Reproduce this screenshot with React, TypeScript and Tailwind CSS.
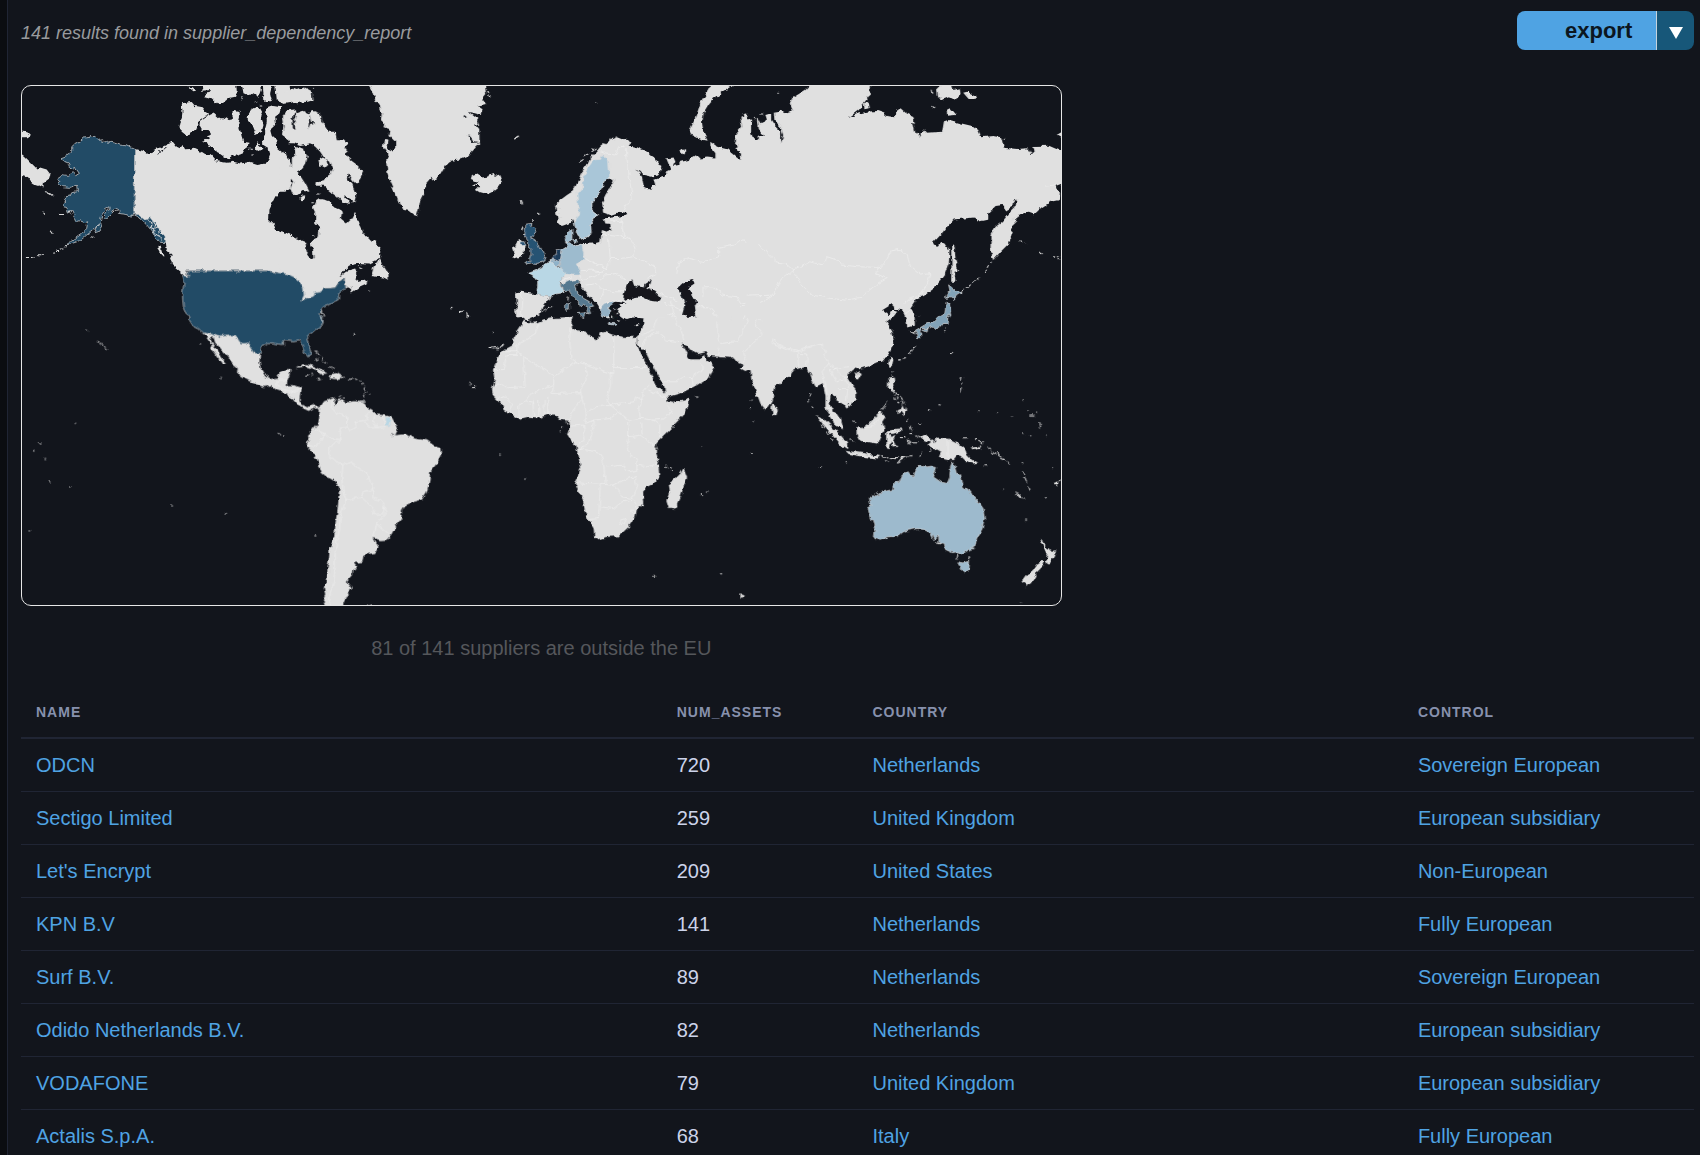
interface Supplier {
  name: string;
  assets: number;
  country: string;
  control: string;
}

interface Sheet {
  id: string;
  origin: string;
  land: string;
  tinted?: { d: string; fill: string }[];
  water?: string;
  borders?: string;
  specks?: string;
}

const suppliers: Supplier[] = [
  { name: "ODCN", assets: 720, country: "Netherlands", control: "Sovereign European" },
  { name: "Sectigo Limited", assets: 259, country: "United Kingdom", control: "European subsidiary" },
  { name: "Let's Encrypt", assets: 209, country: "United States", control: "Non-European" },
  { name: "KPN B.V", assets: 141, country: "Netherlands", control: "Fully European" },
  { name: "Surf B.V.", assets: 89, country: "Netherlands", control: "Sovereign European" },
  { name: "Odido Netherlands B.V.", assets: 82, country: "Netherlands", control: "European subsidiary" },
  { name: "VODAFONE", assets: 79, country: "United Kingdom", control: "European subsidiary" },
  { name: "Actalis S.p.A.", assets: 68, country: "Italy", control: "Fully European" },
];

// The map is split in sheets, each drawn at three units per pixel from its own origin.
const sheets: Sheet[] = [
  {
    id: "north-america-west",
    origin: "translate(20 80) scale(.33333)",
    land:
      "M343,207 365,212 385,222 392,222 400,210 415,205 430,197 445,190 458,185 470,200 480,205 488,195 495,208 510,207 520,203 540,212 555,222 572,226 585,240 600,245 620,248 640,245 660,250 680,247 690,248 712,255 735,250 745,235 750,222 745,205 730,195 728,180 735,165 735,150 750,150 755,168 768,180 772,205 785,215 800,225 812,250 812,325 795,335 780,335 765,350 748,385 747,420 760,432 768,450 790,455 812,465 812,590 775,578 745,572 503,572 485,570 465,555 455,545 450,535 455,525 440,510 437,485 430,470 410,450 395,430 375,420 358,405 343,400z" +
      "M-5,222 5,222 20,235 35,250 50,265 60,262 80,268 95,288 85,295 72,305 70,322 55,315 40,310 25,300 15,285 -5,300zM-5,153 22,157 30,165 20,172 -5,172z" +
      "M485,70 515,66 525,78 545,82 555,95 567,103 550,115 535,125 525,150 510,155 500,168 490,160 475,145 478,130 485,115 487,95z" +
      "M569,105 580,100 600,118 615,118 622,112 632,120 640,115 635,100 645,90 658,93 660,110 655,130 660,150 665,170 670,185 688,188 685,205 670,210 660,228 645,222 630,235 615,232 600,222 585,215 575,200 560,195 555,185 545,182 560,180 570,175 560,165 575,160 565,150 545,150 538,138 540,125 550,118z" +
      "M535,12 550,24 545,32 570,30 560,42 550,48 575,55 590,70 610,68 625,55 645,50 650,35 648,12zM665,12 670,40 690,48 700,40 715,50 722,30 720,12zM728,12 730,40 725,55 740,68 755,60 750,40 757,12zM765,12 770,60 790,72 812,68 812,12z" +
      "M680,110 690,92 705,83 720,85 728,100 725,120 730,135 725,155 708,165 700,150 692,130 680,120zM740,85 760,78 783,82 778,100 765,110 768,135 750,152 735,152 740,120 738,100zM712,190 730,205 720,215 705,208z" +
      "M455,545 475,552 495,568 503,578 502,592 488,580 470,565 455,552zM412,497 422,500 426,515 432,530 420,518 413,505zM505,20 518,22 528,32 520,34zM660,52 668,54 664,62zM578,238 600,242 595,248 570,246z",
    tinted: [
      {
        fill: "#234b66",
        d: "M343,207 320,198 300,195 280,188 262,186 258,182 245,184 245,176 235,178 225,170 212,168 210,162 203,173 190,174 180,182 178,188 165,188 155,197 155,212 145,225 123,233 135,248 145,252 150,265 165,270 165,262 178,280 168,286 160,278 145,286 130,284 110,298 120,305 115,312 130,320 150,322 170,315 172,335 155,338 150,348 138,350 128,380 140,382 145,396 158,390 165,405 160,415 165,427 180,422 195,428 203,425 200,445 185,462 170,472 150,485 135,494 150,492 180,482 200,465 225,445 240,430 245,405 255,390 270,380 270,388 258,394 250,415 265,412 278,400 275,390 285,384 300,390 295,400 315,402 330,408 343,403 358,403 375,417 390,412 405,430 420,452 435,468 437,487 425,487 412,478 400,460 385,440 370,425 350,408 343,406zM235,432 248,437 240,453 225,458z",
      },
    ],
    water: "M410,222 425,208 445,197 426,214zM622,235 650,225 640,240zM780,288 802,300 795,302z",
    specks:
      "M22,532 h12 M38,531 h6 M52,527 h8 M66,524 h5 M98,519 h6 M108,514 h8 M120,507 h9 M132,500 h7 M76,338 l14,3 8,6 M118,403 h12 M68,396 l5,4 M90,452 l6,8 M216,472 l3,-2 M705,66 l5,3 M720,75 l5,0 M695,225 h5 M690,205 h4 M385,422 l8,10 -2,10 10,4 0,12 12,4 M395,425 l12,16 8,4 2,14 M412,462 l10,6 2,12 M280,394 l14,-2 M150,392 l6,10",
  },
  {
    id: "north-america-east",
    origin: "translate(280 80) scale(.33333)",
    land:
      "M108,365 120,357 145,362 160,380 180,388 185,400 182,415 200,430 215,415 225,398 235,430 248,455 265,475 285,485 300,510 300,530 290,540 262,553 230,552 205,558 185,578 178,590 200,572 225,565 232,580 226,595 238,605 265,598 262,610 240,620 215,637 210,625 200,620 195,594 180,600 165,622 135,625 120,640 100,650 65,660 0,600 -5,600 -5,455 20,460 50,475 75,485 80,510 78,525 95,535 100,530 98,505 90,490 100,480 115,468 118,445 105,430 105,400 98,385z" +
      "M272,588 280,560 298,535 302,550 318,568 325,580 325,600 310,592 290,590z" +
      "M-5,215 10,215 20,235 22,250 35,260 35,235 45,225 43,208 55,200 72,208 80,230 75,250 65,265 50,275 62,290 75,310 88,335 70,333 55,345 35,340 30,325 40,300 30,295 20,320 -5,335z" +
      "M10,140 5,110 20,92 45,88 50,100 70,92 85,100 100,93 118,100 122,120 135,140 145,155 165,155 170,178 190,178 203,190 192,200 205,215 195,222 205,235 225,250 252,275 245,290 230,312 220,305 203,282 200,292 215,312 228,345 222,368 205,352 190,345 210,372 190,368 170,350 150,335 135,320 108,320 110,305 130,300 150,285 157,265 150,245 130,230 120,215 105,200 90,190 60,195 45,190 25,190 15,175 5,165z" +
      "M-5,38 15,38 35,25 50,30 70,22 95,35 97,60 80,65 50,70 30,62 -5,65zM115,240 128,232 142,240 145,255 130,262 118,255zM58,352 70,345 75,358 63,365z" +
      "M262,10 280,40 285,60 296,75 298,90 305,100 302,120 312,130 310,145 328,150 325,165 345,185 345,205 330,215 320,210 325,182 312,180 308,200 325,225 318,240 320,265 325,295 340,330 355,365 370,390 385,392 400,405 410,408 415,390 420,360 435,330 437,310 455,290 460,298 480,285 500,250 510,242 540,238 560,230 580,210 598,188 597,150 580,130 597,135 590,115 565,95 575,98 600,105 607,88 595,80 617,75 606,60 618,45 614,10z" +
      "M575,285 590,280 600,292 620,290 640,282 648,288 655,280 665,305 655,320 640,332 620,342 595,335 585,328 595,318 575,318 592,308 572,300z",
    water: "M42,98 48,98 42,120 46,150 38,145 37,115zM88,105 92,125 105,128 90,132 84,150 86,128zM205,560 228,552 222,562zM563,162 574,174 580,184 598,187 572,189 568,176zM552,105 560,112 550,115z",
    specks:
      "M706,173 l8,-5 M723,364 l3,8 M772,396 l2,6 M513,685 h2 M536,694 h7 M546,693 h3 M560,704 l6,6 M222,762 h1 M636,757 h2 M627,802 h5 M640,803 h6 M650,800 l6,6 M662,800 l6,-8 M265,633 h2 M625,45 l5,3 M622,35 h4 M112,342 h8 M95,368 h5 M98,466 l3,3 M235,560 l8,4 M97,22 h2",
  },
  {
    id: "europe",
    origin: "translate(500 80) scale(.33333)",
    land:
      "M166,375 180,360 200,345 215,335 225,320 235,300 245,275 260,255 268,235 285,218 300,200 320,185 350,172 365,178 380,176 390,188 385,195 410,202 440,215 465,235 483,262 475,285 455,290 430,285 408,268 425,290 430,320 450,330 452,315 465,315 460,300 490,290 500,270 510,265 498,235 520,232 525,245 518,258 535,255 540,245 565,240 590,225 600,235 620,232 645,235 645,220 630,200 630,185 650,200 680,208 700,225 720,240 722,225 705,205 715,200 703,185 705,165 725,140 720,115 735,108 752,120 752,160 765,190 758,215 760,250 745,278 755,275 770,245 765,220 790,228 800,245 812,240 812,812 430,812 410,790 415,768 428,745 433,715 400,712 375,720 360,710 350,690 360,675 340,668 325,675 325,715 312,712 295,680 280,660 262,645 240,618 238,600 215,602 190,612 178,602 190,590 195,572 178,560 187,508 200,500 220,500 245,492 280,490 300,485 303,460 305,450 320,455 332,450 330,432 315,430 310,415 335,412 370,408 380,402 350,398 330,405 308,397 305,365 315,345 330,320 340,300 325,295 310,305 305,330 290,345 275,365 275,395 290,405 268,435 270,455 262,470 240,478 228,455 225,435 218,420 205,430 185,438 172,425 168,400z" +
      "M45,637 60,635 110,643 128,648 155,652 140,660 125,680 122,700 100,712 80,720 65,710 48,712 45,690 50,665z" +
      "M50,483 65,480 73,495 70,520 60,530 37,537 40,520 35,505 45,500zM635,10 705,10 665,35 645,50 625,75 610,100 605,130 610,160 622,182 600,178 575,165 568,150 580,125 590,100 600,70 615,45z" +
      "M402,733 420,728 412,738zM540,215 548,208 558,215 550,225zM730,102 740,100 742,110 732,110zM812,100 795,105 800,120 780,130 772,115 775,150 790,168 812,170z",
    tinted: [
      { fill: "#a9c6d8", d: "M305,222 315,235 325,245 328,292 325,295 310,305 305,330 290,345 275,365 275,395 288,405 268,435 270,455 262,470 240,478 228,455 222,430 235,400 232,370 230,335 248,325 248,290 265,260 280,240 300,238z" },
      { fill: "#285273", d: "M78,432 95,430 92,440 107,450 100,465 92,472 105,480 112,490 120,510 128,515 137,530 130,545 110,550 95,548 75,553 90,540 82,535 95,525 95,508 85,500 85,482 73,465 75,450zM60,485 72,485 75,495 60,497z" },
      { fill: "#b9d7e5", d: "M110,643 112,605 100,590 83,580 105,572 120,565 135,550 150,543 160,552 175,562 195,572 190,590 178,602 185,625 188,638 165,642 150,650 128,648z" },
      { fill: "#8fb2c9", d: "M150,543 162,538 174,545 176,558 168,560z" },
      { fill: "#1d3c5c", d: "M160,535 170,512 187,508 182,528 178,545 162,538z" },
      { fill: "#9dbbce", d: "M187,508 200,500 198,488 212,490 220,500 245,492 250,520 250,540 228,552 240,572 235,585 215,585 195,582 190,572 178,560 176,545 182,530zM195,465 210,450 215,445 215,475 205,490 197,488zM218,478 230,478 226,490z" },
      { fill: "#54788f", d: "M185,612 205,602 235,598 238,610 222,615 230,635 250,655 268,665 280,678 268,680 272,692 262,702 260,685 235,668 215,645 205,630 188,632zM232,700 258,698 252,713zM197,668 208,668 207,690 197,690z" },
      { fill: "#93b1c5", d: "M300,690 310,670 340,663 343,670 322,680 332,695 318,712 305,705zM328,728 352,732 350,736 328,733z" },
    ],
    water:
      "M385,605 395,600 402,618 430,622 432,612 455,597 450,612 438,622 465,635 483,655 475,665 450,662 425,650 400,655 375,662 366,652 370,635 378,620z" +
      "M532,625 555,605 578,597 582,610 560,625 575,640 580,660 592,662 583,675 588,710 565,712 548,705 555,680 545,650zM335,672 360,672 378,672 372,668 345,665 328,680 335,700 345,715 355,715zM544,790 560,795 572,812 550,812z",
    borders:
      "M300,215 320,222 345,225 355,200 372,200 M378,205 380,235 385,275 395,350 370,390 M362,412 365,435 370,470 M305,462 345,465 370,470 395,480 405,505 400,530 M325,480 330,535 M330,420 362,425 M250,535 275,545 320,565 M330,535 360,535 400,530 430,545 468,560 465,585 440,595 M240,572 270,570 300,575 320,565 330,535 M235,585 250,598 275,592 300,575 M300,600 315,585 350,580 375,600 M260,615 290,610 310,635 300,660 M310,630 345,635 370,635 M295,680 320,665 360,660 M530,580 535,545 565,535 610,545 655,530 655,505 700,495 720,480 745,492 780,500 812,545 M608,650 608,620 640,620 665,645 710,650 720,670 760,660 812,655 M650,735 650,710 625,680 592,680 M650,735 665,770 655,812 M480,640 520,655 530,665 M490,670 520,680 545,690 M430,720 490,712 515,700 M490,712 470,760 430,780 M515,700 525,740 545,790 M720,680 770,672 M690,770 720,735 745,690 M62,637 68,660 65,690 62,710 M178,602 215,590 M90,720 92,735 M204,712 195,740 208,812 M165,375 170,395",
    specks:
      "M287,70 h2 M46,174 l8,-5 M64,365 l2,8 M112,398 l2,4 M68,440 l-4,8 M70,460 l4,4 M96,424 l6,-6 M236,247 l12,-8 M255,230 l8,-8 M275,212 l10,-8 M204,650 l-1,10 M132,688 l5,-3 M143,682 h5 M158,678 h2 M295,402 l2,3 M340,685 l4,3 M346,698 l4,3 M335,710 l3,3 M352,718 l4,3 M355,705 l5,2 M170,385 h10 M170,400 h8 M172,415 h10 M330,175 l-4,8 M348,170 l-2,8 M762,115 l5,4 M778,102 h6 M775,230 l14,-4 8,12",
  },
  {
    id: "asia",
    origin: "translate(760 80) scale(.33333)",
    land:
      "M-5,180 -5,165 15,165 0,145 0,132 25,150 30,140 15,120 30,118 45,140 62,155 62,190 68,165 60,140 42,120 40,95 60,92 75,98 97,92 88,70 95,55 115,42 135,30 155,10 328,10 328,45 310,70 295,90 262,115 290,102 320,95 350,93 370,100 380,108 405,112 412,90 420,85 435,98 455,108 460,135 465,160 478,172 490,148 500,158 545,155 550,125 565,120 600,130 635,138 650,150 660,172 700,168 722,172 730,203 770,207 800,205 812,222 822,218 818,198 865,197 910,217 910,308 885,318 898,340 895,360 870,365 840,385 820,403 805,398 780,400 765,425 755,435 757,455 745,490 720,515 698,540 690,505 690,465 705,440 725,425 745,400 765,380 768,358 758,362 755,380 735,392 728,375 705,378 683,400 683,418 655,424 640,412 610,415 580,418 560,440 540,465 518,488 530,498 540,488 555,490 567,510 565,550 550,590 520,625 490,648 470,655 460,670 450,685 462,705 463,735 440,742 437,715 425,690 400,686 395,672 365,690 385,705 395,690 410,695 400,708 378,725 395,750 400,785 385,820 365,845 300,850 -45,845 -45,180z" +
      "M572,495 582,500 585,540 595,573 582,575 585,605 572,605 573,560zM530,25 545,12 575,12 578,30 598,25 600,42 580,60 565,52 550,58 532,50zM608,38 620,35 648,48 642,60 625,58zM558,90 568,85 585,105 560,107zM310,70 322,68 325,85 312,88zM888,165 910,152 910,177zM385,845 392,830 398,835 395,855 388,862z",
    tinted: [
      { fill: "#82a3b8", d: "M565,615 580,628 605,637 590,645 580,658 568,650 555,655 560,640 568,635zM558,665 570,672 573,695 562,712 560,730 545,730 540,738 522,748 515,740 500,745 480,745 478,755 485,765 472,777 465,750 480,742 500,730 520,728 535,710 552,700zM488,750 502,745 500,755z" },
    ],
    borders:
      "M-5,490 20,520 45,545 75,550 98,570 150,545 190,555 200,530 230,540 245,555 290,560 360,562 375,545 390,512 420,508 440,525 450,560 480,585 508,580 500,615 475,650 M98,570 125,615 155,645 210,655 255,660 300,652 345,615 380,595 345,580 360,562 M98,570 60,600 40,645 0,670 M-40,648 40,645 M430,670 450,655 470,650 M435,700 450,690 M-5,715 20,735 25,770 60,800 100,815 135,805 180,795 195,830 185,850 M25,770 45,780 100,800 150,805 M110,815 115,850 M135,815 125,845 M855,318 885,315",
    specks:
      "M515,30 l2,10 M517,82 l3,4 M52,40 h2 M600,635 l8,-5 M615,625 l6,-4 M625,618 l5,-4 M638,610 l6,-6 M650,600 l6,-8 M672,575 l3,-5 M680,562 l4,-6 M688,550 l4,-4 M778,482 l6,4 M792,488 l3,3 M838,516 l7,5 M878,530 h4 M890,530 h3 M895,536 h4 M462,800 l-4,6 M450,815 l-5,5 M432,833 h3 M415,839 h5 M552,752 h2 M573,817 h2 M604,893 h1 M475,707 h1 M462,755 l-12,0 M395,888 h2 M728,178 h4 M318,70 l4,-3 M530,160 h10 M757,420 l10,-8 M555,745 h1",
  },
  {
    id: "americas",
    origin: "translate(170 300) scale(.33333)",
    land:
      "M100,98 125,103 150,110 190,105 205,115 215,130 235,128 245,145 255,160 270,160 268,185 272,205 285,228 300,237 320,232 330,215 345,207 362,207 358,225 352,240 350,255 370,255 393,262 390,280 388,300 395,312 412,322 430,313 445,320 450,335 435,322 415,332 400,325 380,312 370,300 355,283 335,275 320,270 300,255 280,260 250,250 215,230 200,218 203,205 185,190 175,172 160,155 148,140 135,128 130,110 120,110 125,125 135,140 145,160 158,178 168,190 155,190 140,170 130,155 120,145 125,135 112,115z" +
      "M445,340 450,320 462,303 480,297 497,290 490,305 495,318 500,300 515,297 530,307 550,303 575,305 585,312 590,322 605,328 620,343 645,345 665,352 675,370 682,390 675,405 695,403 710,402 730,415 770,420 790,435 810,442 813,465 800,490 780,515 778,540 770,575 755,598 730,605 705,615 695,630 693,655 675,680 665,700 650,718 630,720 610,713 618,728 625,740 615,758 580,763 577,785 550,788 562,803 550,808 548,825 530,845 545,865 530,885 520,905 518,926 468,926 458,900 465,885 462,855 470,850 472,800 477,770 478,745 492,710 497,660 503,620 507,560 495,545 470,530 455,518 445,490 430,460 412,440 410,430 418,415 413,405 430,385 442,370z" +
      "M380,203 395,192 415,192 440,203 472,220 450,222 440,210 425,205 405,198zM482,222 500,218 522,232 500,238 478,234zM438,235 455,238 445,241z",
    tinted: [
      {
        fill: "#234b66",
        d: "M53,-88 295,-88 325,-82 350,-80 375,-68 390,-55 400,-35 402,-15 395,0 410,-5 430,-12 433,-22 450,-25 465,-35 495,-38 510,-60 525,-66 530,-40 520,-32 505,-20 505,-2 480,10 460,18 452,25 457,35 448,42 460,58 455,78 440,85 420,102 410,115 415,135 422,155 420,170 413,173 405,160 398,145 395,130 385,122 370,125 350,122 335,127 345,132 330,133 315,130 295,127 275,140 270,160 255,160 245,145 235,128 222,130 215,130 205,115 190,105 150,110 125,103 100,98 85,85 70,78 58,60 60,48 48,40 40,20 38,0 37,-20 42,-55 38,-75 55,-70z",
      },
      { fill: "#b9d7e5", d: "M645,350 655,350 664,362 658,377 645,376 648,362z" },
    ],
    water: "M395,202 403,205 398,208zM672,402 665,412 668,402z",
    borders:
      "M487,300 483,320 495,335 515,345 530,350 530,380 510,385 512,418 M530,380 540,392 560,380 555,365 585,360 590,375 600,383 620,382 645,378 M600,330 585,345 590,360 M613,345 610,365 620,382 M640,348 645,378 M430,385 462,400 480,415 512,418 480,440 475,465 495,480 503,490 520,493 545,482 555,500 590,520 595,540 612,555 610,570 580,572 573,590 550,595 527,602 518,570 515,530 518,495 M462,400 450,425 430,440 415,435 M573,590 610,625 608,643 640,640 642,615 630,600 612,595 610,570 M642,620 650,635 620,670 610,712 M620,670 655,700 M527,602 520,620 510,650 508,690 500,720 495,760 495,800 490,850 480,880 478,918 M442,320 448,335 M320,255 322,240 350,240 M345,270 370,275 393,262 M355,285 372,272 M322,258 345,270 M385,300 392,310",
    specks:
      "M535,237 h12 M553,237 h5 M568,240 l3,2 M578,248 l2,5 M582,262 l2,5 M585,275 h2 M584,285 l-2,5 M598,282 h1 M575,303 l8,2 M510,291 h3 M520,293 h3 M435,155 l6,4 M445,160 l2,6 M438,175 l2,10 M455,172 l4,6 M465,185 l4,4 M478,200 l6,3 M488,205 h5 M552,101 h2 M408,227 h6 M425,223 h3 M323,400 l5,4 M338,404 h3 M152,232 h2 M90,134 h1 M167,640 h3 M431,706 h3 M2,614 h2 M870,35 h5 M842,25 h2 M890,43 l4,4 M895,247 h3 M592,914 h3 M602,914 h4 M455,30 l5,18 M450,50 l8,15 M462,862 l4,14 M475,800 l4,14 M-218,124 l6,2 M-208,130 h5 M-200,134 l6,5 M-195,144 l5,4 M-250,90 h2 M-285,372 h2 M-302,560 h2 M-360,545 h3 M-410,450 l2,3 M-375,475 h2 M-392,428 h2 M-420,688 h2",
  },
  {
    id: "africa",
    origin: "translate(470 290) scale(.33333)",
    land:
      "M162,90 170,100 200,97 220,88 250,84 280,82 308,80 303,95 308,105 303,112 320,120 345,125 365,140 383,148 388,130 405,125 430,135 460,140 500,140 500,165 510,185 520,205 535,235 545,260 555,285 575,300 588,315 592,332 605,335 640,328 657,322 655,345 640,375 610,405 585,430 560,455 555,475 563,510 567,560 550,580 530,590 518,605 522,640 500,655 495,680 475,710 445,738 410,740 385,747 372,742 370,715 355,690 345,670 338,630 325,605 314,580 322,560 332,535 325,500 318,470 300,450 290,435 298,410 297,392 270,390 255,373 235,373 200,385 175,382 148,388 120,370 100,360 95,345 80,330 68,318 65,295 73,270 68,240 80,205 100,180 128,165 130,140 150,110z" +
      "M520,80 782,80 782,203 745,200 712,197 705,186 680,192 658,180 648,160 632,157 645,185 660,208 690,208 700,192 705,205 720,215 732,232 715,262 680,285 630,310 595,320 585,318 582,290 560,250 540,215 525,185 512,172 505,165 500,140 515,135z" +
      "M640,533 650,560 640,590 630,620 615,655 595,652 588,630 598,605 595,580 615,565 630,550z",
    borders:
      "M430,135 430,250 420,250 345,222 318,215 250,258 160,200 140,185 140,165 165,150 195,130 205,100 M430,232 525,232 M303,112 298,145 302,205 318,215 M98,182 140,182 140,193 110,193 100,238 70,238 M160,203 165,290 110,293 95,280 70,285 M250,258 250,285 215,300 185,310 165,335 M345,222 348,265 330,300 335,320 310,360 295,390 M250,285 245,310 330,308 M420,250 420,290 410,320 420,345 440,340 495,335 498,320 515,330 515,310 535,285 M420,345 380,350 345,370 335,320 M345,370 345,400 370,390 420,385 445,365 475,390 510,385 505,350 515,330 M445,365 420,345 M510,385 550,390 575,388 605,365 592,350 M535,300 590,325 M550,390 568,405 568,440 M475,390 475,440 510,435 555,470 M515,395 515,430 M475,440 470,470 480,495 500,505 M325,475 355,480 390,490 400,520 405,580 M320,578 430,585 470,565 495,560 M500,505 500,540 475,545 460,525 410,530 M500,525 530,530 565,520 M390,585 385,680 M390,650 430,655 455,635 490,630 500,655 M430,585 455,620 485,625 500,595 495,560 M360,688 385,685 M370,390 365,430 350,465 325,475 M298,408 340,405 345,440 325,465 M450,690 465,685 465,700 452,703z M483,660 495,660 493,672 482,668z M148,388 145,345 165,335 190,340 M188,330 190,380 M205,330 205,380 M222,330 222,375 M232,320 232,372 M80,325 105,320 125,340 120,365 M515,165 525,145 560,125 590,150 630,155 M580,275 620,275 640,262 665,262 M665,262 695,240 695,220 M560,85 545,120 520,135 M600,30 615,90 632,120 640,150 M740,95 740,130 750,165 740,195 M665,262 668,282",
    specks:
      "M57,172 h3 M66,173 h4 M76,176 h6 M90,173 l6,-6 M66,127 h2 M0,282 h3 M12,284 l3,4 M5,295 h8 M277,410 l1,2 M270,425 h1 M288,395 l2,4 M88,495 h2 M163,567 h2 M675,318 h8 M693,467 h1 M693,613 h3 M711,606 h2 M586,528 l4,4 M597,532 h2 M602,538 h2 M557,475 l1,3 M557,490 l1,3 M217,65 l6,-4 M240,50 h6",
  },
  {
    id: "asia-pacific",
    origin: "translate(720 300) scale(.33333)",
    land:
      "M-3,60 480,60 500,90 515,110 515,130 505,160 485,180 450,197 430,203 415,208 400,205 382,220 380,232 392,250 408,270 408,300 390,310 375,322 368,310 350,300 335,280 328,285 325,310 332,325 345,335 358,355 368,388 345,375 330,350 315,325 315,290 310,265 305,250 285,260 275,240 270,225 258,200 240,205 220,210 212,225 185,245 160,262 157,300 145,320 135,328 120,310 105,270 92,235 90,205 75,213 60,205 70,195 55,190 40,172 -3,172z" +
      "M155,310 165,318 172,330 168,345 157,345 153,325zM285,345 310,355 340,385 365,410 380,430 380,447 360,435 335,405 310,375zM375,452 400,455 440,460 480,468 475,475 430,470 385,462z" +
      "M408,380 425,385 445,370 455,360 480,335 495,350 485,365 492,388 478,410 470,430 440,425 420,422 408,400zM497,395 512,390 540,388 545,383 545,393 520,400 505,402 510,410 525,405 518,418 530,440 520,442 512,425 508,447 500,445 497,420z" +
      "M590,402 605,408 615,402 625,412 640,425 650,412 680,415 710,430 735,450 740,465 755,480 770,487 755,490 735,485 720,470 710,468 700,480 675,475 655,470 662,455 645,445 620,438 632,428 610,420z" +
      "M503,235 520,232 522,255 515,268 528,280 512,273 502,262zM532,330 545,325 548,312 557,330 550,348 540,335 530,342zM478,333 495,312 502,298 498,312 485,328zM505,180 515,172 517,182 510,200 503,192zM403,222 415,217 424,222 415,235 405,232zM750,442 775,440 785,430 778,445 760,450z" +
      "M958,715 970,725 975,740 985,745 990,752 1007,750 1000,768 988,790 975,782 982,770 970,742zM963,782 972,785 965,800 950,815 940,835 930,850 915,853 903,845 915,828 938,808 950,790z" +
      "M883,575 895,582 908,595 900,593zM1000,548 1010,545 1010,557 1000,555zM60,882 73,886 70,892 60,892zM555,470 565,467 545,480 528,490 540,475z",
    tinted: [
      {
        fill: "#9dbacd",
        d: "M447,595 470,580 500,572 515,568 525,545 535,548 545,525 560,518 572,525 580,528 585,512 600,498 620,500 632,498 648,502 638,530 660,545 680,550 688,530 690,500 695,485 702,500 708,520 720,522 725,545 728,560 750,575 755,585 770,600 788,625 792,655 785,685 770,712 760,745 745,748 725,762 712,755 695,757 675,748 670,728 655,730 655,705 640,718 630,698 610,688 590,685 555,692 530,708 500,710 480,720 460,715 465,690 455,660 445,635 442,620 450,618zM713,785 730,788 747,783 745,808 732,817 722,808z",
      },
    ],
    borders:
      "M110,60 105,75 125,100 105,120 70,155 75,180 65,190 M158,120 185,140 235,152 300,132 315,150 310,165 325,190 345,205 M158,120 155,130 200,150 228,155 M230,150 235,200 M238,160 262,162 258,200 M325,190 305,215 315,250 320,285 M345,205 330,210 340,230 350,245 370,240 M345,205 385,200 M345,205 365,225 380,245 385,265 M350,265 380,265 375,300 M0,130 50,125 75,75 85,55 M683,415 683,475 M415,385 455,380 475,355 M320,330 330,325",
    specks:
      "M268,280 l-2,8 M265,298 l1,8 M272,320 l2,6 M302,375 l8,8 M318,395 l6,10 M330,415 l4,6 M483,470 h20 M512,472 h18 M540,472 h14 M495,482 l12,4 M565,467 h10 M595,465 l10,-6 M625,455 l3,-6 M570,378 l3,14 M568,400 h8 M585,408 h6 M540,412 h10 M560,420 l10,4 M565,428 h25 M528,290 l4,6 M540,290 l6,8 M520,290 l2,10 M530,305 l5,3 M545,303 l3,6 M520,278 l12,6 M385,420 h6 M395,422 h4 M403,455 h4 M517,215 h1 M560,355 l2,8 M400,362 l2,2 M92,300 h1 M98,362 h1 M90,460 h3 M300,502 h2 M377,488 h3 M93,325 h1 M722,233 l1,5 M724,250 v2 M722,265 l-4,12 M694,157 h1 M655,314 h4 M627,331 h2 M775,333 h2 M832,337 h1 M872,350 h2 M907,300 h2 M923,333 h3 M945,336 h3 M930,345 h8 M958,370 l2,14 M975,403 l1,3 M907,400 h2 M930,404 h1 M598,370 h2 M730,413 h8 M765,415 h4 M775,420 l10,8 M802,440 l8,10 M815,455 l8,8 M830,460 l12,8 M840,475 l14,5 M860,485 l6,6 M790,497 h8 M905,490 h1 M906,515 l3,6 M907,532 l8,6 M915,540 l3,6 M925,560 l3,10 M910,597 h2 M847,567 h1 M994,505 h1 M915,660 h3 M974,590 h2 M1012,543 l8,-4 M913,858 l4,-2 M899,908 h3 M590,494 l8,4 M712,762 l-2,12 M742,770 l3,8 M645,728 l12,3 M583,92 l-4,6 M580,142 l-8,12 M567,160 h2 M548,175 h3 M534,180 h3 M-200,828 h3 M0,818 h4",
  },
];

function WorldMap() {
  return (
    <svg viewBox="22 86 1038 519" role="img" aria-label="Suppliers per country" className="block w-full">
      {/* breaks the straight segments up into a ragged coastline */}
      <filter id="coast" filterUnits="userSpaceOnUse" x="15" y="80" width="1055" height="535">
        <feTurbulence type="fractalNoise" baseFrequency="0.18" numOctaves="2" seed="4" />
        <feDisplacementMap in="SourceGraphic" scale="5" xChannelSelector="R" yChannelSelector="G" />
      </filter>
      <g filter="url(#coast)">
        {sheets.map((sheet) => (
          <g key={sheet.id} transform={sheet.origin} strokeLinejoin="round" strokeLinecap="round">
            <path d={sheet.land} fill="#e0e0e0" />
            {sheet.borders && <path d={sheet.borders} fill="none" stroke="#f2f2f2" strokeWidth="2" />}
            {sheet.tinted?.map((area) => (
              <path key={area.d} d={area.d} fill={area.fill} stroke="#dedede" strokeWidth="2" />
            ))}
            {sheet.water && <path d={sheet.water} fill="#12151c" />}
            {sheet.specks && <path d={sheet.specks} fill="none" stroke="#d8d8d8" strokeWidth="3" />}
          </g>
        ))}
      </g>
    </svg>
  );
}

function ExportButton() {
  return (
    <div className="flex h-[39px] w-[177px] overflow-hidden rounded-lg">
      <button type="button" className="flex-1 bg-[#4fa3e3] pl-12 text-left text-[22px] font-bold text-[#0b1620]">
        export
      </button>
      <button type="button" aria-label="Export options" className="flex w-[38px] items-center justify-center border-l border-[#c5d3dd] bg-[#175779]">
        <svg viewBox="0 0 14 12" className="mt-1 h-3 w-3.5">
          <path d="M0 0h14L7 12z" fill="#fff" />
        </svg>
      </button>
    </div>
  );
}

function CellLink({ children }: { children: string }) {
  return <a href="#" className="text-[#4fa3e3]">{children}</a>;
}

export default function App() {
  return (
    <div className="min-h-screen bg-[#0b0d11] pl-[7px] font-['Liberation_Sans',Arial,sans-serif]">
      <main className="min-h-screen border-l border-[#202534] bg-[#12151c] pt-[11px] pr-1.5 pl-[13px]">
        <header className="flex h-[74px] items-start justify-between">
          <p className="pt-2.5 text-[18px] leading-6 italic text-[#999b9e]">141 results found in supplier_dependency_report</p>
          <ExportButton />
        </header>

        <figure className="w-[62.2%]">
          <div className="overflow-hidden rounded-[10px] border border-[#e6e6e6]">
            <WorldMap />
          </div>
          <figcaption className="pt-7 text-center text-[20px] leading-7 text-[#55575b]">
            81 of 141 suppliers are outside the EU
          </figcaption>
        </figure>

        <table className="mt-[26px] w-full table-fixed border-collapse text-left">
          <colgroup>
            <col className="w-[38.3%]" />
            <col className="w-[11.7%]" />
            <col className="w-[32.6%]" />
            <col />
          </colgroup>
          <thead>
            <tr className="h-[50px] border-b-2 border-[#202534]">
              {["name", "num_assets", "country", "control"].map((h) => (
                <th key={h} className="px-[15px] text-[14px] font-bold tracking-[1px] uppercase text-[#8791ad]">
                  {h}
                </th>
              ))}
            </tr>
          </thead>
          <tbody>
            {suppliers.map((s) => (
              <tr key={s.name} className="h-[53px] border-b border-[#202534] text-[20px] leading-7">
                <td className="px-[15px]"><CellLink>{s.name}</CellLink></td>
                <td className="px-[15px] text-[#ccd3ea]">{s.assets}</td>
                <td className="px-[15px]"><CellLink>{s.country}</CellLink></td>
                <td className="px-[15px]"><CellLink>{s.control}</CellLink></td>
              </tr>
            ))}
          </tbody>
        </table>
      </main>
    </div>
  );
}
